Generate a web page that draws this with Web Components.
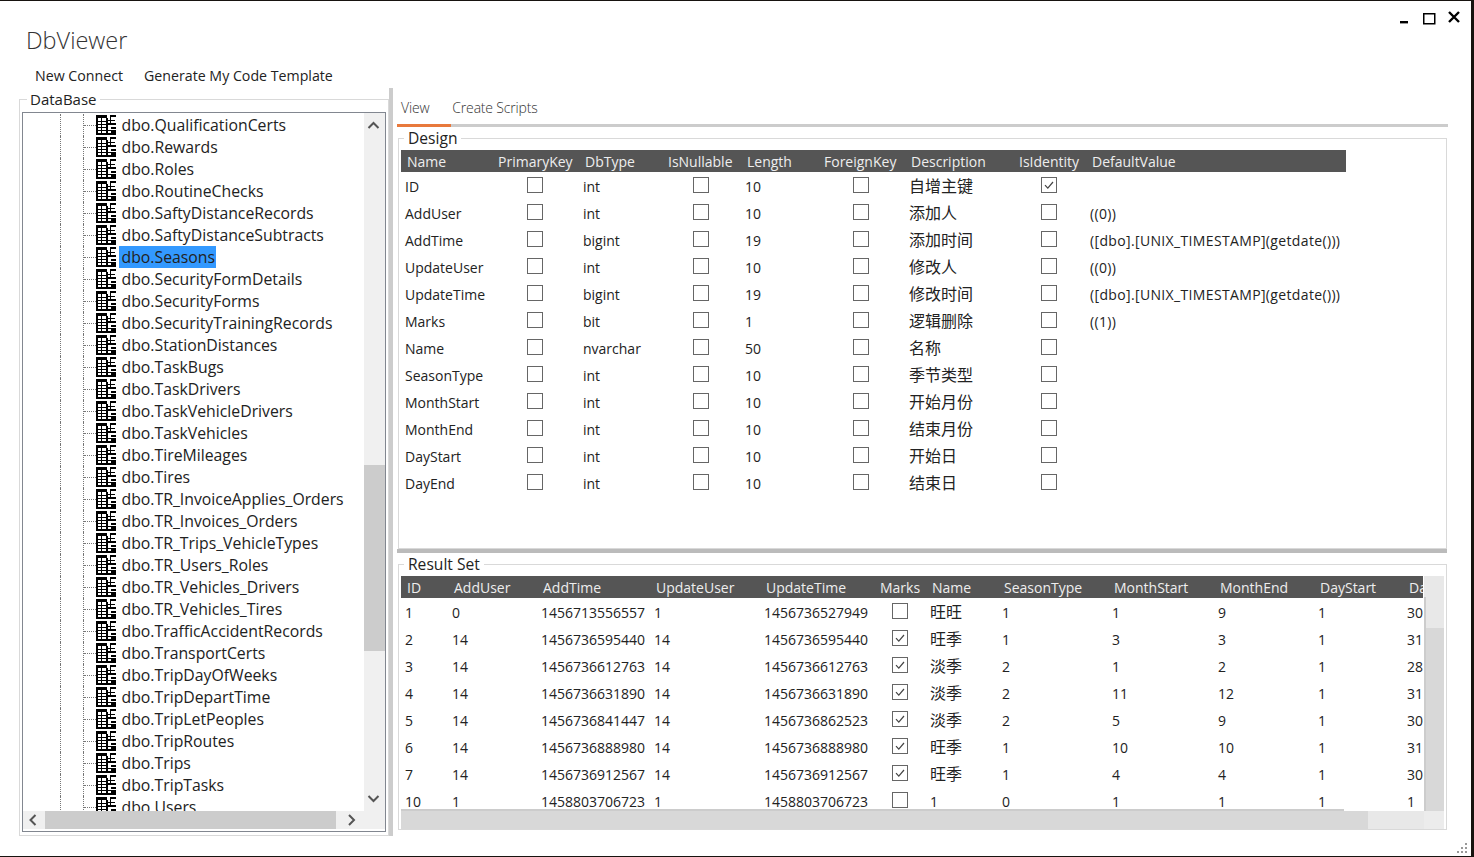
<!DOCTYPE html>
<html>
<head>
<meta charset="utf-8">
<title>DbViewer</title>
<style>
    html, body { margin: 0; padding: 0; height: 100%; overflow: hidden; background: #17130f; }
    body { font-family: "Open Sans", "Noto Sans CJK SC", sans-serif; color: #222; }
</style>
</head>
<body>
<db-window>
    <db-tree slot="left"></db-tree>
    <db-tabs slot="right"></db-tabs>
    <db-group slot="right" label="Design" style="height:422px">
        <db-grid id="design" class="shift"></db-grid>
    </db-group>
    <db-hsplit slot="right"></db-hsplit>
    <db-group slot="right" label="Result Set" style="height:277px">
        <db-result></db-result>
    </db-group>
</db-window>

<script>
class DbWindow extends HTMLElement {
    constructor() {
        super();
        this.attachShadow({ mode: 'open' });
        this.shadowRoot.innerHTML = `
            <style>
                :host { display: flex; flex-direction: column; width: 1471px; height: 855px; margin-top: 1px; background: #fff; position: relative; }
                .title { height: 61px; box-sizing: border-box; padding: 20px 0 0 26px; font-size: 23.5px; line-height: 38px; font-weight: 300; color: #333; display: flex; }
                .title span { flex: 1; }
                .menu { height: 26px; display: flex; font-size: 14.2px; line-height: 28px; color: #222; }
                .menu span { margin-left: 35px; }
                .menu span + span { margin-left: 21px; }
                .main { height: 748px; display: flex; }
                .left { width: 370px; margin-left: 19px; flex: none; }
                .vsplit { width: 4px; margin-right: 1px; background: #ccc; flex: none; }
                .right { width: 1054px; flex: none; display: flex; flex-direction: column; }
                .ctrl { position: absolute; top: 0; right: 0; }
                .grip { position: absolute; right: 3px; bottom: 2px; }
            </style>
            <div class="title"><span>DbViewer</span></div>
            <div class="menu"><span>New Connect</span><span>Generate My Code Template</span></div>
            <div class="main">
                <div class="left"><slot name="left"></slot></div>
                <div class="vsplit"></div>
                <div class="right"><slot name="right"></slot></div>
            </div>
            <svg class="ctrl" width="80" height="30" viewBox="0 0 80 30">
                <rect x="9" y="20" width="8" height="2.4" fill="#000"/>
                <rect x="32.75" y="12.75" width="11" height="10" fill="none" stroke="#000" stroke-width="1.5"/>
                <path d="M58 11l10 10M68 11l-10 10" stroke="#000" stroke-width="2.4" fill="none"/>
            </svg>
            <svg class="grip" width="11" height="11" viewBox="0 0 11 11" fill="#999">
                <rect x="8" y="0" width="2" height="2"/>
                <rect x="4" y="4" width="2" height="2"/><rect x="8" y="4" width="2" height="2"/>
                <rect x="0" y="8" width="2" height="2"/><rect x="4" y="8" width="2" height="2"/><rect x="8" y="8" width="2" height="2"/>
            </svg>
        `;
    }
}

class DbGroup extends HTMLElement {
    constructor() {
        super();
        this.attachShadow({ mode: 'open' });
        this.shadowRoot.innerHTML = `
            <style>
                :host { display: block; margin-left: 4px; width: 1049px; flex: none; }
                fieldset { margin: 0; padding: 0 2px 2px; height: 100%; box-sizing: border-box; border: 1px solid #d9d9d9; min-width: 0; }
                legend { margin-left: 3px; padding: 0 4px; font-size: 15.6px; line-height: 23px; color: #222; }
            </style>
            <fieldset><legend></legend><slot></slot></fieldset>
        `;
    }
    connectedCallback() {
        this.shadowRoot.querySelector('legend').textContent = this.getAttribute('label');
    }
}

class DbTabs extends HTMLElement {
    constructor() {
        super();
        this.attachShadow({ mode: 'open' });
        this.shadowRoot.innerHTML = `
            <style>
                :host { display: block; margin-left: 3px; width: 1051px; height: 39px; flex: none; box-sizing: border-box; }
                .tabs { display: flex; height: 36px; font-size: 14px; letter-spacing: -.18px; line-height: 40px; font-weight: 300; color: #333; box-sizing: border-box; padding-left: 4px; }
                .tabs span + span { margin-left: 23px; }
                .line { height: 3px; background: #ccc; }
                .line div { width: 54px; height: 3px; background: #e8793c; }
            </style>
            <div class="tabs"><span>View</span><span>Create Scripts</span></div>
            <div class="line"><div></div></div>
        `;
    }
}

class DbHsplit extends HTMLElement {
    constructor() {
        super();
        this.attachShadow({ mode: 'open' });
        this.shadowRoot.innerHTML = `
            <style>
                :host { display: block; margin-left: 3px; width: 1050px; height: 4px; flex: none; background: #bbb; }
            </style>
        `;
    }
}

class DbCheck extends HTMLElement {
    constructor() {
        super();
        this.attachShadow({ mode: 'open' });
        this.shadowRoot.innerHTML = `
            <style>
                :host { display: block; width: 16px; height: 16px; box-sizing: border-box; border: 1px solid #666; background: #fff; }
                svg { display: none; }
                :host([checked]) svg { display: block; }
            </style>
            <svg width="14" height="14" viewBox="0 0 14 14"><path d="M3 7.2l2.8 3L11 4" fill="none" stroke="#444" stroke-width="1.2"/></svg>
        `;
    }
}

// renders header + rows; a cell of "[x]" / "[ ]" is a checkbox
class DbGrid extends HTMLElement {
    constructor() {
        super();
        this.attachShadow({ mode: 'open' });
        this.shadowRoot.innerHTML = `
            <style>
                :host { display: block; }
                .row { display: grid; height: 27px; line-height: 27px; font-size: 14px; white-space: nowrap; }
                .head { height: 22px; line-height: 23px; background: #555; color: #eee; margin-bottom: 1px; }
                .cell { padding-left: 4px; overflow: hidden; color: #222; }
                .head .cell { padding-left: 6px; color: #eee; }
                .cell.c { padding: 0; display: flex; align-items: center; justify-content: center; }
                .cell.c db-check { margin-top: -3px; }
                :host(.shift) .cell.c { padding-right: 2px; }
                .zh { font-size: 16px; }
                .expr { letter-spacing: .35px; }
            </style>
            <div id="body"></div>
        `;
    }
    setData(widths, heads, rows, width) {
        const tpl = widths.map(w => w + 'px').join(' ');
        const isZh = s => /[^\x00-\x7f]/.test(s);
        const cell = v => {
            if (v === '[x]') return '<div class="cell c"><db-check checked></db-check></div>';
            if (v === '[ ]') return '<div class="cell c"><db-check></db-check></div>';
            const cls = isZh(v) ? ' zh' : v[0] === '(' ? ' expr' : '';
            return `<div class="cell${cls}">${v}</div>`;
        };
        const style = `grid-template-columns:${tpl};width:${width}px`;
        let html = `<div class="row head" style="${style}">${heads.map(h => `<div class="cell">${h}</div>`).join('')}</div>`;
        rows.forEach(r => {
            html += `<div class="row" style="${style}">${r.map(cell).join('')}</div>`;
        });
        this.shadowRoot.getElementById('body').innerHTML = html;
    }
}

class DbResult extends HTMLElement {
    constructor() {
        super();
        this.attachShadow({ mode: 'open' });
        this.shadowRoot.innerHTML = `
            <style>
                :host { display: grid; grid-template-columns: 1023px 20px; grid-template-rows: 235px 18px; }
                .view { height: 235px; overflow: hidden; }
                .inner { height: 233px; overflow: hidden; }
                .edge { width: 943px; height: 2px; background: #ccc; }
                .vbar { display: flex; flex-direction: column; }
                .vtop { height: 21px; background: #e8e8e8; }
                .vrest { flex: 1; display: flex; flex-direction: column; border-left: 2px solid #ccc; }
                .vtrack { height: 31px; background: #e8e8e8; }
                .vthumb { flex: 1; background: #d8d8d8; }
                .hbar { background: #e8e8e8; }
                .hthumb { width: 967px; height: 18px; background: #d8d8d8; }
                .corner { background: #ececec; }
            </style>
            <div class="view"><div class="inner"><db-grid id="g"></db-grid></div><div class="edge"></div></div>
            <div class="vbar"><div class="vtop"></div><div class="vrest"><div class="vtrack"></div><div class="vthumb"></div></div></div>
            <div class="hbar"><div class="hthumb"></div></div>
            <div class="corner"></div>
        `;
    }
    get grid() { return this.shadowRoot.getElementById('g'); }
}

class DbTreeItem extends HTMLElement {
    constructor() {
        super();
        this.attachShadow({ mode: 'open' });
        this.shadowRoot.innerHTML = `
            <style>
                :host { display: flex; height: 22px; padding-left: 37px; font-size: 15.8px; line-height: 22px; color: #222; white-space: nowrap; }
                .g1 { width: 22px; border-left: 1px dotted #777; flex: none; }
                .g2 { width: 12px; border-left: 1px dotted #777; flex: none; position: relative; }
                .g2::after { content: ""; position: absolute; left: 0; right: 0; top: 11px; border-top: 1px dotted #777; }
                svg { flex: none; display: block; margin-top: 1px; }
                .t { margin-left: 3px; padding: 0 2.5px 0 2.5px; width: 92px; }
                :host(:not([selected])) .t { width: auto; }
                :host([selected]) .t { background: #3399ff; }
            </style>
            <div class="g1"></div><div class="g2"></div>
            <svg width="20" height="20" viewBox="0 0 20 20" shape-rendering="crispEdges" fill="#000">
                <rect x="0" y="0" width="2" height="20"/>
                <rect x="0" y="0" width="11" height="3"/>
                <rect x="14" y="0" width="6" height="2"/>
                <rect x="5" y="3" width="1" height="17"/>
                <rect x="10" y="3" width="2" height="17"/>
                <rect x="14" y="0" width="1" height="8"/>
                <rect x="0" y="6" width="11" height="1"/>
                <rect x="0" y="9" width="11" height="1"/>
                <rect x="0" y="12" width="11" height="1"/>
                <rect x="0" y="15" width="11" height="1"/>
                <rect x="11" y="5" width="8" height="1"/>
                <rect x="11" y="8" width="9" height="2"/>
                <rect x="15" y="12" width="5" height="2"/>
                <rect x="11" y="15" width="9" height="1"/>
                <rect x="0" y="18" width="20" height="2"/>
                <rect x="15" y="16" width="5" height="3"/>
            </svg>
            <span class="t"><slot></slot></span>
        `;
    }
}

class DbTree extends HTMLElement {
    constructor() {
        super();
        this.attachShadow({ mode: 'open' });
        this.shadowRoot.innerHTML = `
            <style>
                :host { display: block; height: 748px; }
                fieldset { margin: 0; padding: 2px 2px 2px 2px; height: 100%; box-sizing: border-box; border: 1px solid #d9d9d9; min-width: 0; }
                legend { margin-left: 5px; padding: 0 3px; font-size: 15px; line-height: 22px; color: #222; }
                .box { height: 720px; box-sizing: border-box; border: 1px solid #828790; display: grid; grid-template-columns: 341px 21px; grid-template-rows: 698px 18px 2px; }
                .list { overflow: hidden; padding-top: 1px; box-sizing: border-box; }
                .vbar { background: #f0f0f0; display: flex; flex-direction: column; }
                .vbar svg { flex: none; }
                .thumb { background: #ccc; }
                .hbar { background: #f0f0f0; display: flex; align-items: center; }
                .hthumb { background: #ccc; width: 291px; height: 100%; margin-left: 1px; }
                .corner { background: #f0f0f0; }
            </style>
            <fieldset>
                <legend>DataBase</legend>
                <div class="box">
                    <div class="list" id="list"></div>
                    <div class="vbar">
                        <svg width="21" height="24" viewBox="0 0 21 24"><path d="M4.5 15l5-5 5 5" fill="none" stroke="#555" stroke-width="2"/></svg>
                        <div style="height:328px"></div>
                        <div class="thumb" style="height:186px"></div>
                        <div style="height:136px"></div>
                        <svg width="21" height="24" viewBox="0 0 21 24"><path d="M4.5 9l5 5 5-5" fill="none" stroke="#555" stroke-width="2"/></svg>
                    </div>
                    <div class="hbar">
                        <svg width="21" height="18" viewBox="0 0 21 18"><path d="M12.5 4l-5 5 5 5" fill="none" stroke="#555" stroke-width="2"/></svg>
                        <div class="hthumb"></div>
                        <svg width="28" height="18" viewBox="0 0 28 18"><path d="M13 4l5 5-5 5" fill="none" stroke="#555" stroke-width="2"/></svg>
                    </div>
                    <div class="corner"></div>
                </div>
            </fieldset>
        `;
    }
    setItems(names, selected) {
        const list = this.shadowRoot.getElementById('list');
        list.innerHTML = names.map(n =>
            `<db-tree-item${n === selected ? ' selected' : ''}>dbo.${n}</db-tree-item>`).join('');
    }
}

customElements.define('db-window', DbWindow);
customElements.define('db-group', DbGroup);
customElements.define('db-tabs', DbTabs);
customElements.define('db-hsplit', DbHsplit);
customElements.define('db-check', DbCheck);
customElements.define('db-grid', DbGrid);
customElements.define('db-result', DbResult);
customElements.define('db-tree-item', DbTreeItem);
customElements.define('db-tree', DbTree);

document.querySelector('db-tree').setItems([
    'QualificationCerts', 'Rewards', 'Roles', 'RoutineChecks', 'SaftyDistanceRecords',
    'SaftyDistanceSubtracts', 'Seasons', 'SecurityFormDetails', 'SecurityForms',
    'SecurityTrainingRecords', 'StationDistances', 'TaskBugs', 'TaskDrivers',
    'TaskVehicleDrivers', 'TaskVehicles', 'TireMileages', 'Tires', 'TR_InvoiceApplies_Orders',
    'TR_Invoices_Orders', 'TR_Trips_VehicleTypes', 'TR_Users_Roles', 'TR_Vehicles_Drivers',
    'TR_Vehicles_Tires', 'TrafficAccidentRecords', 'TransportCerts', 'TripDayOfWeeks',
    'TripDepartTime', 'TripLetPeoples', 'TripRoutes', 'Trips', 'TripTasks', 'Users'
], 'Seasons');

const X = '[x]', O = '[ ]';
const ts = '([dbo].[UNIX_TIMESTAMP](getdate()))';
document.getElementById('design').setData(
    [91, 87, 83, 79, 77, 87, 108, 73, 260],
    ['Name', 'PrimaryKey', 'DbType', 'IsNullable', 'Length', 'ForeignKey', 'Description', 'IsIdentity', 'DefaultValue'],
    [
        ['ID', O, 'int', O, '10', O, '自增主键', X, ''],
        ['AddUser', O, 'int', O, '10', O, '添加人', O, '((0))'],
        ['AddTime', O, 'bigint', O, '19', O, '添加时间', O, ts],
        ['UpdateUser', O, 'int', O, '10', O, '修改人', O, '((0))'],
        ['UpdateTime', O, 'bigint', O, '19', O, '修改时间', O, ts],
        ['Marks', O, 'bit', O, '1', O, '逻辑删除', O, '((1))'],
        ['Name', O, 'nvarchar', O, '50', O, '名称', O, ''],
        ['SeasonType', O, 'int', O, '10', O, '季节类型', O, ''],
        ['MonthStart', O, 'int', O, '10', O, '开始月份', O, ''],
        ['MonthEnd', O, 'int', O, '10', O, '结束月份', O, ''],
        ['DayStart', O, 'int', O, '10', O, '开始日', O, ''],
        ['DayEnd', O, 'int', O, '10', O, '结束日', O, '']
    ],
    945
);

document.querySelector('db-result').grid.setData(
    [47, 89, 113, 110, 114, 52, 72, 110, 106, 100, 89, 20],
    ['ID', 'AddUser', 'AddTime', 'UpdateUser', 'UpdateTime', 'Marks', 'Name', 'SeasonType', 'MonthStart', 'MonthEnd', 'DayStart', 'DayEnd'],
    [
        ['1', '0', '1456713556557', '1', '1456736527949', O, '旺旺', '1', '1', '9', '1', '30'],
        ['2', '14', '1456736595440', '14', '1456736595440', X, '旺季', '1', '3', '3', '1', '31'],
        ['3', '14', '1456736612763', '14', '1456736612763', X, '淡季', '2', '1', '2', '1', '28'],
        ['4', '14', '1456736631890', '14', '1456736631890', X, '淡季', '2', '11', '12', '1', '31'],
        ['5', '14', '1456736841447', '14', '1456736862523', X, '淡季', '2', '5', '9', '1', '30'],
        ['6', '14', '1456736888980', '14', '1456736888980', X, '旺季', '1', '10', '10', '1', '31'],
        ['7', '14', '1456736912567', '14', '1456736912567', X, '旺季', '1', '4', '4', '1', '30'],
        ['10', '1', '1458803706723', '1', '1458803706723', O, '1', '0', '1', '1', '1', '1']
    ],
    1022
);
</script>
</body>
</html>
